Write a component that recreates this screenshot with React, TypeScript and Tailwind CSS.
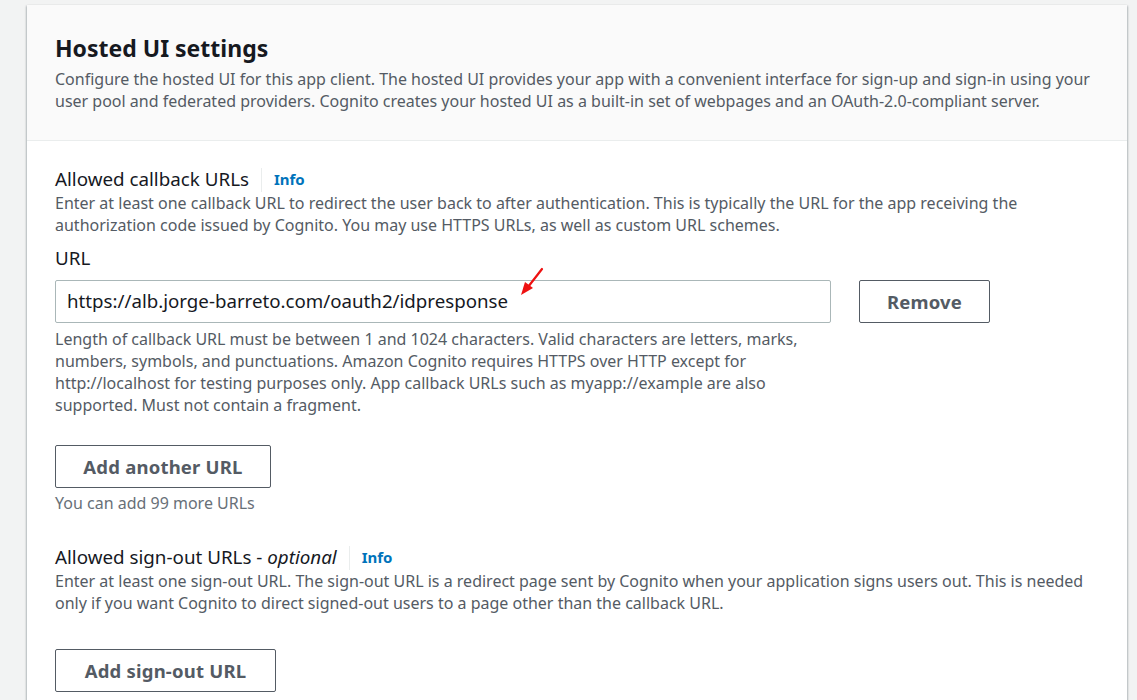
import React from 'react';

function InfoLabel({ children }: { children: React.ReactNode }) {
    return (
        <div className="flex items-center text-[18.8px] leading-[25px] text-[#16191f]">
            <span>{children}</span>
            <span className="mx-[12px] h-[24px] w-px bg-[#eaeded]"></span>
            <span className="text-[15px] font-bold text-[#0073bb]">Info</span>
        </div>
    );
}

function OutlineButton({ label, width }: { label: string; width: string }) {
    return (
        <button
            className={`${width} h-[43px] rounded-[2px] border border-[#545b64] bg-white text-[18.5px] font-bold tracking-[0.2px] text-[#545b64]`}
        >
            {label}
        </button>
    );
}

export default function App() {
    return (
        <div
            className="h-[700px] w-[1137px] overflow-hidden bg-[#f2f3f3] pl-[27px] pt-[5px]"
            style={{ fontFamily: '"Noto Sans", "Open Sans", sans-serif' }}
        >
            <div className="w-[1100px] bg-white shadow-[0_1px_2px_rgba(0,28,36,0.3),1px_1px_2px_rgba(0,28,36,0.15),-1px_1px_2px_rgba(0,28,36,0.15)]">
                {/* header */}
                <div className="border-b border-[#eaeded] bg-[#fafafa] px-[28px] pb-[28px] pt-[27px]">
                    <h2 className="text-[23px] font-bold leading-[32px] text-[#16191f]">Hosted UI settings</h2>
                    <p className="mt-[4px] text-[16px] leading-[22px] text-[#545b64]">
                        Configure the hosted UI for this app client. The hosted UI provides your app with a convenient interface for sign-up and sign-in using your user pool and federated providers. Cognito creates your hosted UI as a built-in set of webpages and an OAuth-2.0-compliant server.
                    </p>
                </div>

                {/* body */}
                <div className="px-[28px] pt-[26px] pb-[20px]">
                    <InfoLabel>Allowed callback URLs</InfoLabel>
                    <p className="text-[16px] leading-[22px] text-[#545b64]">
                        Enter at least one callback URL to redirect the user back to after authentication. This is typically the URL for the app receiving the authorization code issued by Cognito. You may use HTTPS URLs, as well as custom URL schemes.
                    </p>

                    <div className="mt-[10px] text-[18.8px] leading-[24px] text-[#16191f]">URL</div>
                    <div className="mt-[10px] flex items-start gap-[28px]">
                        <div className="w-[776px]">
                            <div className="relative flex h-[43px] items-center rounded-[2px] border border-[#aab7b8] bg-white px-[11px] text-[18.7px] text-[#16191f]">
                                https://alb.jorge-barreto.com/oauth2/idpresponse
                                <svg className="absolute left-[460px] top-[-14px]" width="34" height="34" viewBox="0 0 34 34">
                                    <line x1="26" y1="2" x2="12" y2="20" stroke="#ee1111" strokeWidth="2.2" strokeLinecap="round" />
                                    <polygon points="5,28 9,15 17,21" fill="#ee1111" />
                                </svg>
                            </div>
                            <p className="mt-[5px] w-[770px] text-[16px] leading-[22px] text-[#545b64]">
                                Length of callback URL must be between 1 and 1024 characters. Valid characters are letters, marks, numbers, symbols, and punctuations. Amazon Cognito requires HTTPS over HTTP except for http://localhost for testing purposes only. App callback URLs such as myapp://example are also supported. Must not contain a fragment.
                            </p>
                        </div>
                        <OutlineButton label="Remove" width="w-[131px]" />
                    </div>

                    <div className="mt-[29px]">
                        <OutlineButton label="Add another URL" width="w-[216px]" />
                    </div>
                    <p className="mt-[4px] text-[16px] leading-[22px] text-[#687078]">You can add 99 more URLs</p>

                    <div className="mt-[31px]">
                        <InfoLabel>
                            Allowed sign-out URLs - <i>optional</i>
                        </InfoLabel>
                    </div>
                    <p className="text-[16px] leading-[22px] text-[#545b64]">
                        Enter at least one sign-out URL. The sign-out URL is a redirect page sent by Cognito when your application signs users out. This is needed only if you want Cognito to direct signed-out users to a page other than the callback URL.
                    </p>

                    <div className="mt-[35px]">
                        <OutlineButton label="Add sign-out URL" width="w-[221px]" />
                    </div>
                </div>
            </div>
        </div>
    );
}
